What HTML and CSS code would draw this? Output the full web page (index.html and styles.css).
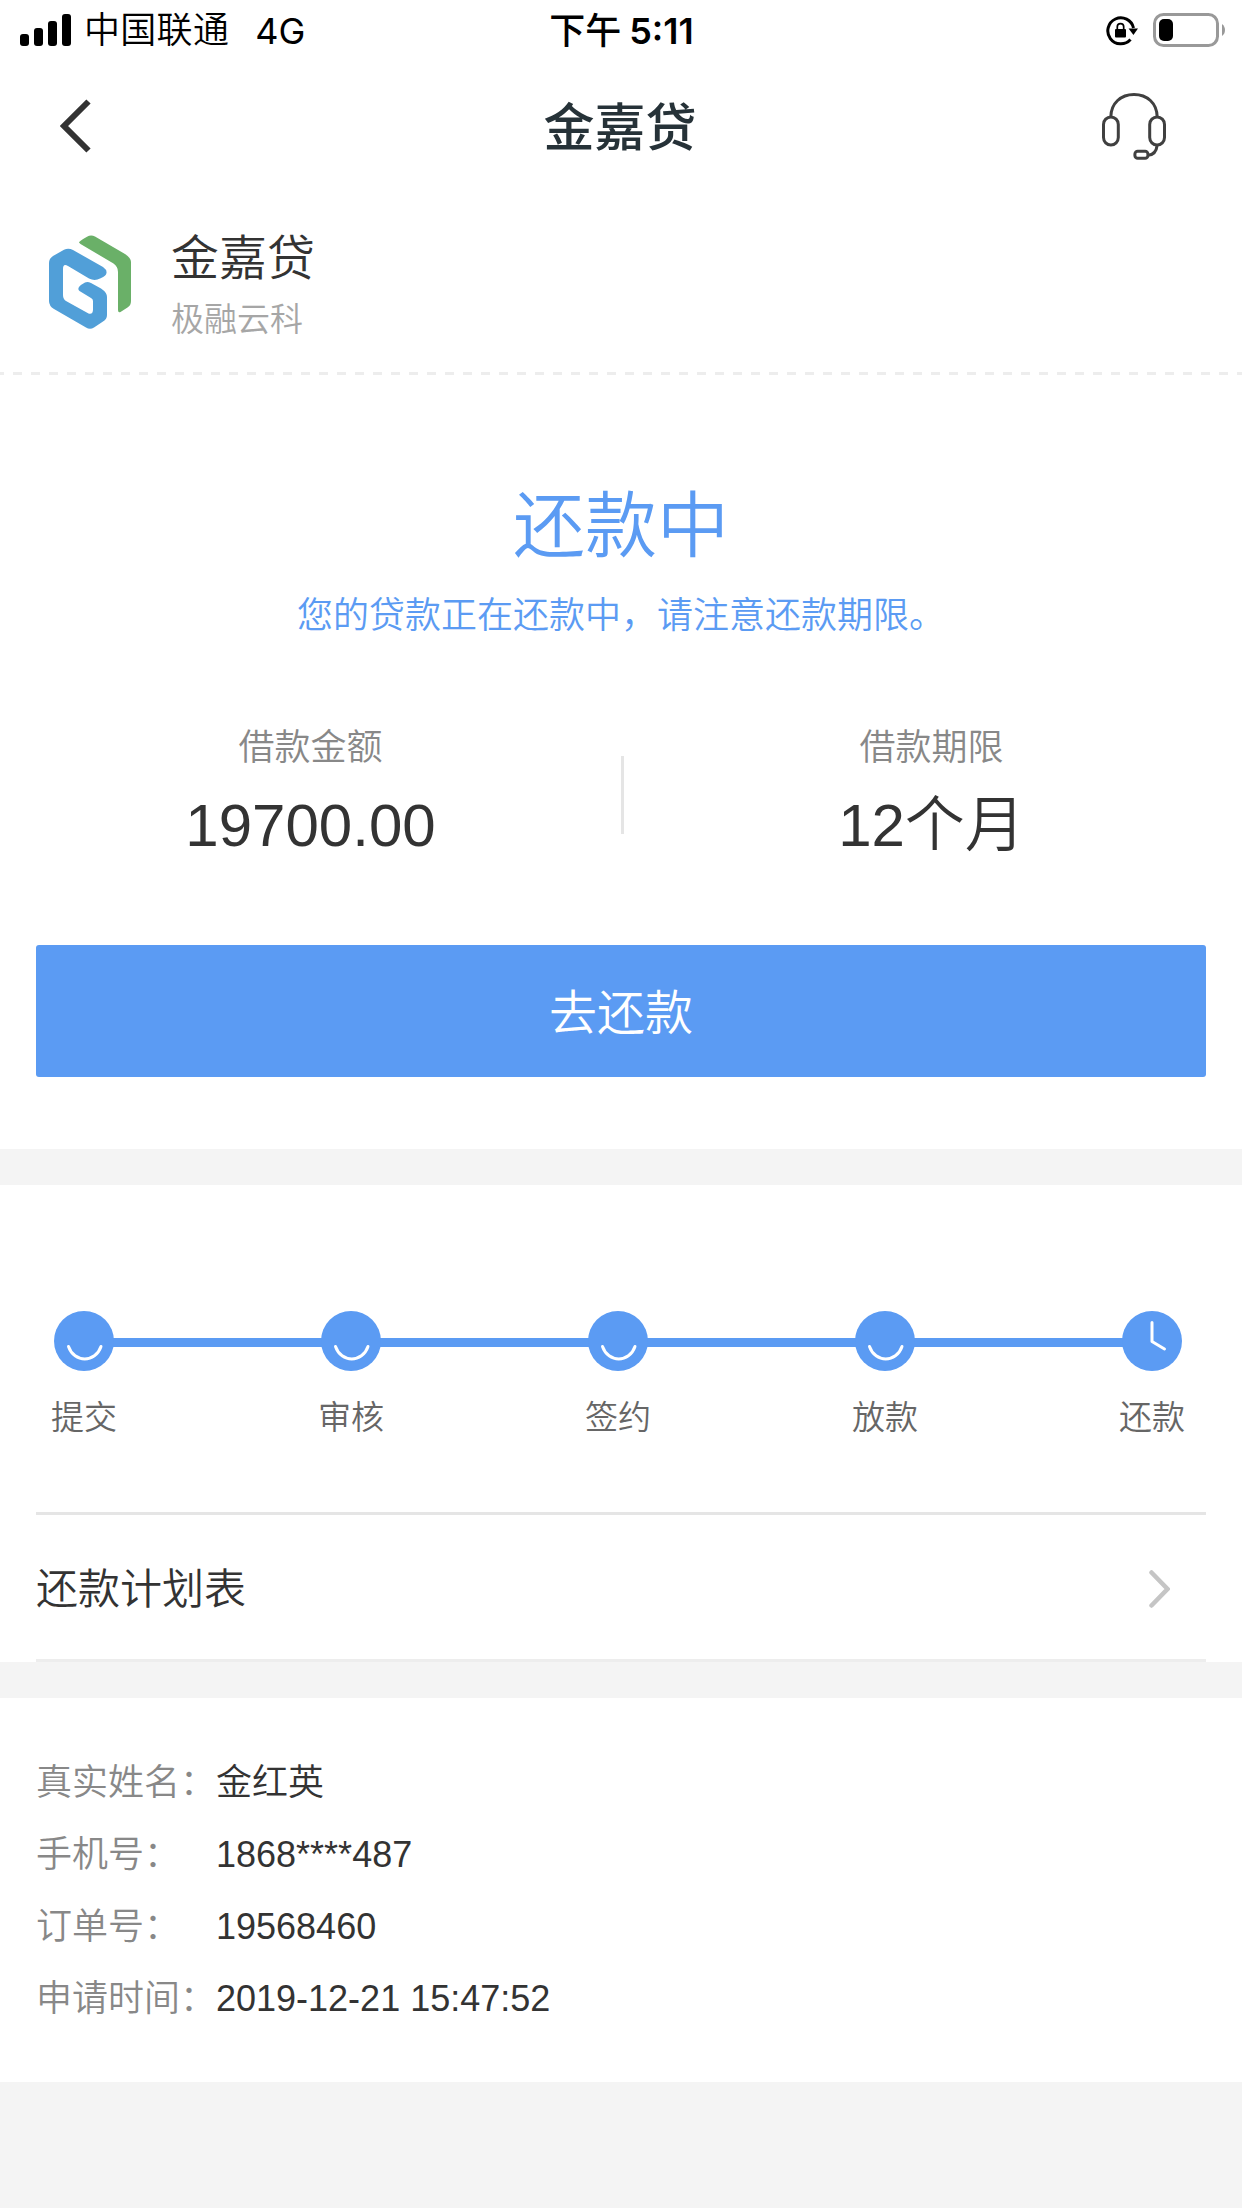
FILE: index.html
```html
<!DOCTYPE html>
<html lang="zh-CN">
<head>
<meta charset="utf-8">
<title>金嘉贷</title>
<link rel="stylesheet" href="styles.css">
</head>
<body>
<header class="status">
  <div class="status-side">
    <svg class="signal" width="51" height="32" viewBox="0 0 51 32"><rect x="0" y="20" width="9" height="12" rx="3"/><rect x="14" y="14" width="9" height="18" rx="3"/><rect x="28" y="7" width="9" height="25" rx="3"/><rect x="42" y="0" width="9" height="32" rx="3"/></svg>
    <span class="carrier">中国联通</span>
    <span class="network">4G</span>
  </div>
  <div class="clock"><span class="period">下午</span><span class="time">5:11</span></div>
  <div class="status-side status-right">
    <svg width="32" height="30" viewBox="0 0 32 30"><path d="M24.5 23.5A13 13 0 1 1 27.5 12" fill="none" stroke="#000" stroke-width="3"/><path d="M22.6 12.5H32L27.4 19Z"/><rect x="9" y="13" width="11" height="8.500" rx="1"/><path d="M11.300 13.500V10.800a3.200 3.200 0 0 1 6.400 0v2.700" fill="none" stroke="#000" stroke-width="1.700"/></svg>
    <svg class="battery" width="73" height="34" viewBox="0 0 73 34"><rect x="1.500" y="1.500" width="63" height="31" rx="9" fill="none" stroke="#999" stroke-width="3"/><rect x="6" y="6" width="14" height="22" rx="5"/><path d="M69 11a7.500 7.500 0 0 1 0 12z" fill="#999"/></svg>
  </div>
</header>
<nav class="nav">
  <svg class="back" width="31" height="54" viewBox="0 0 31 54"><path d="M28.500 2.500L4 27L28.500 51.500" fill="none" stroke="#333" stroke-width="6"/></svg>
  <h1 class="nav-title">金嘉贷</h1>
  <svg class="headset" width="64" height="67" viewBox="0 0 64 67" fill="none" stroke="#404040" stroke-width="3"><rect x="1.500" y="24" width="14.800" height="28" rx="7.400"/><rect x="47.700" y="24" width="14.800" height="28" rx="7.400"/><path d="M8.800 24C9 10 19 1.500 32 1.500S55 10 55.200 24"/><path d="M55.200 52C54.500 58 51.500 62 46 62.200"/><rect x="32.900" y="58.200" width="13" height="7" rx="2.800"/></svg>
</nav>
<section class="brand">
  <svg width="82" height="94" viewBox="0 0 82 94"><path fill="#6ab068" d="M30 7.500Q29.500 6.500 38 1.700Q42 -.8 46 1.500L76 19Q82 23 82 27V66Q82 70.500 78.500 72.500L71.500 77Q69 78 69 75V37Q69 31.500 64.500 28.500L31.500 9Z"/><path fill="#519fd8" d="M4 21L15 14.700Q19.500 12.500 24 15L54 32Q59 35.500 57 39.500Q55.500 42 48.500 44.500Q44.500 45.800 40 43.500L19 31Q14 28 14 34V60Q14 64 17 66L39.500 78.500Q43.500 80 44 75V66Q44 64 42 63L30.500 56Q28.500 54.500 30 52Q32 49.500 36 47.500Q38.500 46.200 42 48L52 53.500Q58 57.500 58 62V80Q58 84 54 86.500L45 92.500Q41 95 37 92.500L5 74Q0 71 0 66V28Q0 23.500 4 21Z"/></svg>
  <div>
    <div class="brand-name">金嘉贷</div>
    <div class="brand-company">极融云科</div>
  </div>
</section>
<main>
  <section class="loan">
    <h2 class="loan-state">还款中</h2>
    <p class="loan-hint">您的贷款正在还款中，请注意还款期限。</p>
    <div class="figures">
      <div class="figure"><div class="figure-label">借款金额</div><div class="figure-value">19700.00</div></div>
      <div class="figure"><div class="figure-label">借款期限</div><div class="figure-value">12个月</div></div>
    </div>
    <button class="repay">去还款</button>
  </section>
  <section class="progress">
    <ol class="steps">
      <li class="step"><svg width="60" height="60" viewBox="0 0 60 60"><circle cx="30" cy="30" r="30"/><path d="M14.500 35.500C20 52 41.500 52 47 35.500"/></svg><span>提交</span></li>
      <li class="step"><svg width="60" height="60" viewBox="0 0 60 60"><circle cx="30" cy="30" r="30"/><path d="M14.500 35.500C20 52 41.500 52 47 35.500"/></svg><span>审核</span></li>
      <li class="step"><svg width="60" height="60" viewBox="0 0 60 60"><circle cx="30" cy="30" r="30"/><path d="M14.500 35.500C20 52 41.500 52 47 35.500"/></svg><span>签约</span></li>
      <li class="step"><svg width="60" height="60" viewBox="0 0 60 60"><circle cx="30" cy="30" r="30"/><path d="M14.500 35.500C20 52 41.500 52 47 35.500"/></svg><span>放款</span></li>
      <li class="step"><svg width="60" height="60" viewBox="0 0 60 60"><circle cx="30" cy="30" r="30"/><path d="M30 11.500V30.500L42.500 38"/></svg><span>还款</span></li>
    </ol>
    <a class="plan"><span>还款计划表</span><svg width="21" height="38" viewBox="0 0 21 38"><path d="M2.500 2.500L18.500 19L2.500 35.500" fill="none" stroke="#c5c5c5" stroke-width="4.500" stroke-linecap="round"/></svg></a>
  </section>
  <dl class="details">
    <dt>真实姓名：</dt><dd>金红英</dd>
    <dt>手机号：</dt><dd>1868****487</dd>
    <dt>订单号：</dt><dd>19568460</dd>
    <dt>申请时间：</dt><dd>2019-12-21 15:47:52</dd>
  </dl>
</main>
</body>
</html>
```
FILE: styles.css
```css
* { box-sizing: border-box; margin: 0; padding: 0; }
body {
  min-height: 2208px;
  background: #f4f4f4;
  color: #333;
  font-family: "Liberation Sans", "Noto Sans CJK SC DemiLight", "Noto Sans CJK SC", sans-serif;
  font-weight: 350;
}
svg { display: block; flex: none; }

.status {
  display: grid;
  grid-template-columns: 1fr auto 1fr;
  align-items: center;
  height: 60px;
  padding: 0 16px 0 20px;
  background: #fff;
  color: #000;
  font-family: Inter, "Noto Sans CJK SC", sans-serif;
  font-size: 36px;
  font-weight: 400;
  line-height: 62px;
}
.status-side { display: flex; align-items: center; }
.status-right { justify-content: flex-end; gap: 15px; }
.signal, .battery { margin-bottom: 2px; }
.carrier {
  margin-left: 13px;
  font-family: "Liberation Sans", "Noto Sans CJK SC DemiLight", "Noto Sans CJK SC", sans-serif;
  font-weight: 350;
  letter-spacing: .3px;
}
.network { margin-left: 26px; }
.clock { display: flex; gap: 8px; margin-right: 3px; font-weight: 500; }
.time { font-weight: 600; }

.nav {
  display: grid;
  grid-template-columns: 64px 1fr 64px;
  align-items: center;
  height: 132px;
  padding: 0 76px 0 60px;
  background: #fff;
}
.nav-title {
  padding: 5px 0 0 14px;
  color: #263238;
  font-family: "Liberation Sans", "Noto Sans CJK SC", sans-serif;
  font-size: 51px;
  font-weight: 500;
  line-height: 127px;
  text-align: center;
}

.brand {
  display: flex;
  gap: 40px;
  height: 183px;
  padding: 43px 0 0 49px;
  background:
    repeating-linear-gradient(90deg, #ededed 0 9px, #fff 9px 18px) -5px 100% / calc(100% + 5px) 3px no-repeat,
    #fff;
}
.brand-name { margin-top: -10px; font-size: 48px; line-height: 68px; }
.brand-company { margin-top: 2px; color: #a6a6a6; font-size: 33px; line-height: 50px; }

.loan {
  height: 774px;
  padding: 100px 36px 0;
  background: #fff;
}
.loan-state { color: #5b9bf3; font-size: 72px; font-weight: 350; line-height: 102px; text-align: center; }
.loan-hint { margin-top: 14px; color: #5b9bf3; font-size: 36px; line-height: 50px; text-align: center; }
.figures {
  display: grid;
  grid-template-columns: 1fr 1fr;
  margin: 82px -36px 0;
  background: linear-gradient(#e5e5e5, #e5e5e5) 621px 33px / 3px 78px no-repeat;
  text-align: center;
}
.figure-label { color: #888; font-size: 36px; line-height: 50px; }
.figure-value { margin-top: 13px; font-size: 60px; line-height: 80px; }
.repay {
  display: block;
  width: 100%;
  height: 132px;
  margin-top: 79px;
  padding-top: 5px;
  border: 0;
  border-radius: 3px;
  background: #5b9bf3;
  color: #fff;
  font-family: inherit;
  font-size: 48px;
  font-weight: 350;
  line-height: 127px;
}

.progress { height: 477px; margin-top: 36px; padding: 126px 36px 0; background: #fff; }
.steps {
  display: flex;
  justify-content: space-between;
  height: 201px;
  padding: 0 21px 0 15px;
  list-style: none;
  background: linear-gradient(#5b9bf3, #5b9bf3) 48px 27px / 1068px 9px no-repeat;
}
.step { color: #666; font-size: 33px; line-height: 48px; }
.step svg { margin: 0 3px 23px; }
.step circle { fill: #5b9bf3; }
.step path { fill: none; stroke: #fff; stroke-width: 3px; stroke-linecap: round; stroke-linejoin: round; }
.plan {
  display: flex;
  justify-content: space-between;
  align-items: center;
  height: 150px;
  padding-right: 36px;
  border-top: 3px solid #e5e5e5;
  border-bottom: 3px solid #ededed;
  font-size: 42px;
  line-height: 60px;
}
.plan span { margin-top: 6px; }
.plan svg { margin-top: 3px; }

.details {
  display: grid;
  grid-template-columns: 180px 1fr;
  height: 384px;
  margin-top: 36px;
  padding: 49px 36px 47px;
  background: #fff;
  font-size: 36px;
  line-height: 72px;
}
.details dt { color: #888; white-space: nowrap; }
```
